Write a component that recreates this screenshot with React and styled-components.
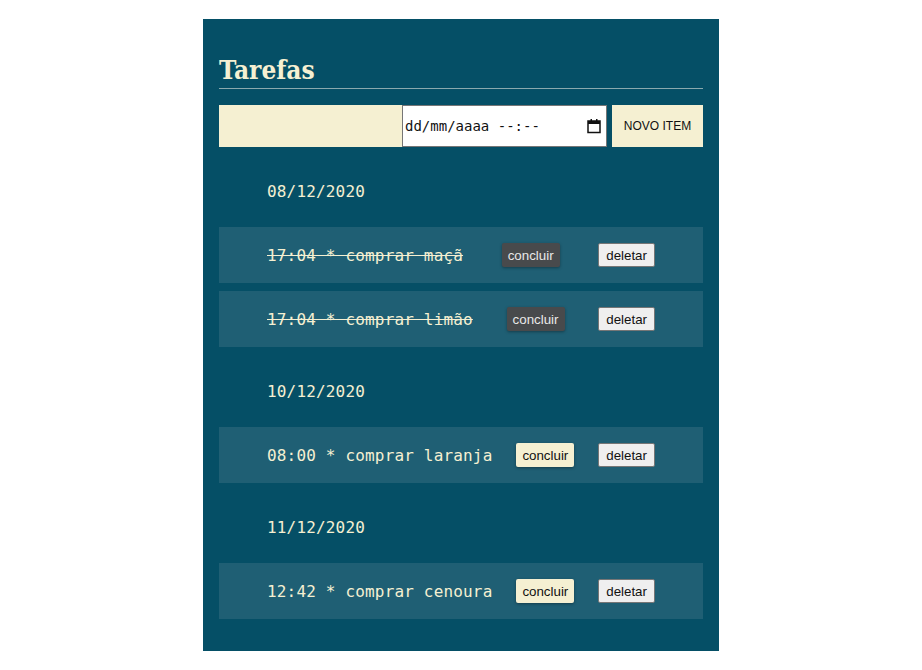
import React from "react"
import styled, { createGlobalStyle } from "styled-components"

const GlobalStyle = createGlobalStyle`
  body {
    margin: 0;
    background: #ffffff;
    font-family: "Liberation Sans", Arial, sans-serif;
  }
`

const cream = "#f5f0d2"

const Board = styled.div`
  width: 516px;
  box-sizing: border-box;
  margin: 19px auto 0;
  padding: 16px 16px 24px;
  background: #054f66;
  color: ${cream};
`

const Title = styled.h1`
  margin: 20px 0 16px;
  padding-bottom: 3px;
  font-family: "DejaVu Serif", "Liberation Serif", serif;
  font-stretch: condensed;
  font-weight: 700;
  font-size: 26px;
  line-height: 30px;
  color: ${cream};
  border-bottom: 1px solid #8aa9ae;
`

const Form = styled.div`
  display: flex;
  align-items: stretch;
  height: 42px;
  margin-bottom: 8px;
`

const TextInput = styled.input`
  width: 183px;
  box-sizing: border-box;
  border: none;
  outline: none;
  background: ${cream};
  padding: 0 8px;
  font-size: 14px;
`

const DateField = styled.div`
  width: 205px;
  box-sizing: border-box;
  display: flex;
  align-items: center;
  justify-content: space-between;
  padding: 0 4px 0 2px;
  background: #ffffff;
  border: 1px solid #767676;
  font-family: "DejaVu Sans Mono", "Liberation Mono", monospace;
  font-size: 14px;
  color: #111;
  white-space: pre;
`

const AddButton = styled.button`
  margin-left: 5px;
  width: 91px;
  border: none;
  background: ${cream};
  color: #111;
  font-family: "Liberation Sans", Arial, sans-serif;
  font-size: 12px;
  cursor: pointer;
`

const DateHeader = styled.div`
  height: 72px;
  display: flex;
  align-items: center;
  padding: 0 48px;
  font-family: "DejaVu Sans Mono", "Liberation Mono", monospace;
  font-size: 16px;
  letter-spacing: 0.17px;
  color: ${cream};
`

const Row = styled.div`
  height: 56px;
  margin-bottom: 8px;
  display: flex;
  align-items: center;
  justify-content: space-between;
  padding: 0 48px;
  background: #1f5f74;
`

const TaskText = styled.span`
  font-family: "DejaVu Sans Mono", "Liberation Mono", monospace;
  font-size: 16px;
  letter-spacing: 0.17px;
  color: ${cream};
  text-decoration: ${p => (p.$done ? "line-through" : "none")};
  white-space: pre;
`

const DoneButton = styled.button`
  height: 24px;
  padding: 0 6px;
  border: none;
  border-radius: 2px;
  font-family: "Liberation Sans", Arial, sans-serif;
  font-size: 13.33px;
  background: ${p => (p.$done ? "#484a4c" : cream)};
  color: ${p => (p.$done ? "#e8e8e8" : "#111")};
  box-shadow: 0 1px 3px rgba(0, 0, 0, 0.35);
  cursor: pointer;
`

const DeleteButton = styled.button`
  height: 24px;
  padding: 0 7px;
  border: 1px solid #767676;
  border-radius: 2px;
  font-family: "Liberation Sans", Arial, sans-serif;
  font-size: 13.33px;
  background: #efefef;
  color: #111;
  cursor: pointer;
`

const CalendarIcon = () => (
  <svg width="16" height="16" viewBox="0 0 16 16">
    <rect x="2" y="3" width="12" height="11.5" fill="none" stroke="#111" strokeWidth="1.5" />
    <rect x="2" y="3" width="12" height="3" fill="#111" />
    <rect x="4.5" y="1" width="1.5" height="3" fill="#111" />
    <rect x="10" y="1" width="1.5" height="3" fill="#111" />
  </svg>
)

const groups = [
  {
    date: "08/12/2020",
    items: [
      { text: "17:04 * comprar maçã", done: true },
      { text: "17:04 * comprar limão", done: true },
    ],
  },
  { date: "10/12/2020", items: [{ text: "08:00 * comprar laranja", done: false }] },
  { date: "11/12/2020", items: [{ text: "12:42 * comprar cenoura", done: false }] },
]

export default function App() {
  return (
    <>
      <GlobalStyle />
      <Board>
        <Title>Tarefas</Title>
        <Form>
          <TextInput type="text" />
          <DateField>
            <span>dd/mm/aaaa --:--</span>
            <CalendarIcon />
          </DateField>
          <AddButton>NOVO ITEM</AddButton>
        </Form>
        {groups.map(group => (
          <React.Fragment key={group.date}>
            <DateHeader>{group.date}</DateHeader>
            {group.items.map(item => (
              <Row key={item.text}>
                <TaskText $done={item.done}>{item.text}</TaskText>
                <DoneButton $done={item.done}>concluir</DoneButton>
                <DeleteButton>deletar</DeleteButton>
              </Row>
            ))}
          </React.Fragment>
        ))}
      </Board>
    </>
  )
}
